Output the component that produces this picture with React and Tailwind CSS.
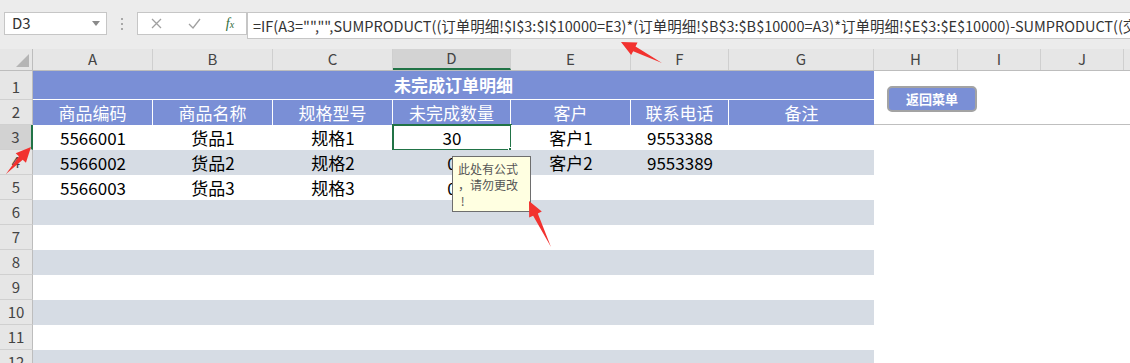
import React from 'react';

// column letters + widths (A..K), widths measured from the sheet
const cols = [
  { l: 'A', w: 'w-[120px]' },
  { l: 'B', w: 'w-[120px]' },
  { l: 'C', w: 'w-[120px]' },
  { l: 'D', w: 'w-[118px]' },
  { l: 'E', w: 'w-[120px]' },
  { l: 'F', w: 'w-[98px]' },
  { l: 'G', w: 'w-[145px]' },
  { l: 'H', w: 'w-[84px]' },
  { l: 'I', w: 'w-[83px]' },
  { l: 'J', w: 'w-[83px]' },
  { l: '', w: 'w-[83px]' },
];

const headers = ['商品编码', '商品名称', '规格型号', '未完成数量', '客户', '联系电话', '备注'];

const data = [
  ['5566001', '货品1', '规格1', '30', '客户1', '9553388', ''],
  ['5566002', '货品2', '规格2', '0', '客户2', '9553389', ''],
  ['5566003', '货品3', '规格3', '0', '', '', ''],
];

const FONT = "font-['Noto_Sans_CJK_SC',sans-serif]";

// red screenshot arrow from tail to tip
const arrowPoints = (x1, y1, x2, y2) => {
  const dx = x2 - x1;
  const dy = y2 - y1;
  const L = Math.hypot(dx, dy);
  const ux = dx / L;
  const uy = dy / L;
  const nx = -uy;
  const ny = ux;
  const h = 15;
  const w1 = 2.6;
  const w2 = 7;
  const bx = x2 - ux * h;
  const by = y2 - uy * h;
  const pts = [
    [x1, y1],
    [bx + nx * w1, by + ny * w1],
    [bx + nx * w2, by + ny * w2],
    [x2, y2],
    [bx - nx * w2, by - ny * w2],
    [bx - nx * w1, by - ny * w1],
  ];
  return pts.map((p) => p.join(',')).join(' ');
};

const FormulaBar = () => (
  <div className="h-[49px] bg-[#ececec] relative flex items-start pt-[12px] pl-[4px]">
    <div className="w-[103px] h-[23px] bg-white border border-[#c6c6c6] flex items-center justify-between pl-[7px] pr-[6px]">
      <span className="text-[15px] text-[#333]">D3</span>
      <svg width="8" height="5" viewBox="0 0 8 5">
        <path d="M0 0 L8 0 L4 5 Z" fill="#8a8a8a" />
      </svg>
    </div>
    <div className="w-[30px] h-[23px] flex flex-col items-center justify-center gap-[3px]">
      <span className="w-[2px] h-[2px] bg-[#a8a8a8]" />
      <span className="w-[2px] h-[2px] bg-[#a8a8a8]" />
      <span className="w-[2px] h-[2px] bg-[#a8a8a8]" />
    </div>
    <div className="w-[110px] h-[23px] bg-white border border-[#c6c6c6] flex items-center">
      <div className="w-[36px] flex justify-center">
        <svg width="11" height="11" viewBox="0 0 11 11">
          <path d="M1 1 L10 10 M10 1 L1 10" stroke="#a0a0a0" strokeWidth="1.3" />
        </svg>
      </div>
      <div className="w-[40px] flex justify-center">
        <svg width="13" height="11" viewBox="0 0 13 11">
          <path d="M1 6 L5 10 L12 1" stroke="#a0a0a0" strokeWidth="1.3" fill="none" />
        </svg>
      </div>
      <div className="w-[32px] flex justify-center">
        <span className="font-['Liberation_Serif',serif] italic text-[14px] text-[#2e6b3a] leading-none">
          f<span className="text-[10px]">x</span>
        </span>
      </div>
    </div>
    <div className="flex-1 h-[27px] bg-white border-y border-l border-[#c6c6c6] overflow-hidden whitespace-nowrap pl-[5px] flex items-center">
      <span className="text-[14.5px] text-[#333]">
        =IF(A3="","",SUMPRODUCT((订单明细!$I$3:$I$10000=E3)*(订单明细!$B$3:$B$10000=A3)*订单明细!$E$3:$E$10000)-SUMPRODUCT((交易明细!$I$3:$I$10000=E3)
      </span>
    </div>
  </div>
);

const ColHeader = () => (
  <div className="flex h-[22px] bg-[#e6e6e6] border-b border-[#bdbdbd]">
    <div className="w-[33px] shrink-0 relative border-r border-[#bdbdbd]">
      <svg className="absolute right-[3px] bottom-[3px]" width="13" height="13" viewBox="0 0 13 13">
        <path d="M13 0 L13 13 L0 13 Z" fill="#b5b5b5" />
      </svg>
    </div>
    {cols.map((c, i) => (
      <div
        key={i}
        className={`${c.w} shrink-0 flex items-center justify-center text-[15px] text-[#444] border-r border-[#cfcfcf] ${
          c.l === 'D' ? 'bg-[#d3d3d3] border-b-2 border-b-[#217346]' : ''
        }`}
      >
        {c.l}
      </div>
    ))}
  </div>
);

const RowNum = ({ n, h, active }) => (
  <div
    className={`w-[33px] shrink-0 ${h} flex items-end justify-center pb-[1px] text-[15px] text-[#444] border-b border-[#d0d0d0] ${
      active ? 'bg-[#d2d2d2] border-r-2 border-r-[#217346]' : 'bg-[#e6e6e6] border-r border-r-[#bdbdbd]'
    }`}
  >
    {n}
  </div>
);

export default function App() {
  const rows = [];
  for (let r = 3; r <= 12; r++) {
    const vals = data[r - 3] || [];
    const stripe = r % 2 === 0 ? 'bg-[#d6dce4]' : 'bg-white';
    rows.push(
      <div key={r} className="flex h-[25px]">
        <RowNum n={r} h="h-[25px]" active={r === 3} />
        {cols.map((c, i) => (
          <div
            key={i}
            className={`${c.w} shrink-0 relative flex items-center justify-center text-[17px] text-black ${
              i < 7 ? stripe : 'bg-white'
            }`}
          >
            {vals[i] || ''}
            {r === 3 && c.l === 'D' && (
              <div className="absolute left-[-1px] top-[-1px] right-[-1px] bottom-[-1px] border-2 border-[#217346]">
                <span className="absolute right-[-4px] bottom-[-4px] w-[6px] h-[6px] bg-[#217346] border border-white" />
              </div>
            )}
          </div>
        ))}
      </div>
    );
  }

  return (
    <div className={`w-[1130px] h-[363px] overflow-hidden bg-white relative ${FONT}`}>
      <FormulaBar />
      <ColHeader />

      {/* row 1: merged title */}
      <div className="flex h-[29px]">
        <RowNum n={1} h="h-[29px]" />
        <div className="w-[841px] shrink-0 bg-[#7a8fd6] border-b border-white flex items-center justify-center text-white font-bold text-[17px]">
          未完成订单明细
        </div>
        <div className="flex-1 bg-white" />
      </div>

      {/* row 2: column titles */}
      <div className="flex h-[25px]">
        <RowNum n={2} h="h-[25px]" />
        {headers.map((t, i) => (
          <div
            key={t}
            className={`${cols[i].w} shrink-0 bg-[#7a8fd6] flex items-center justify-center text-white text-[17px] ${
              i < 6 ? 'border-r border-white' : ''
            }`}
          >
            {t}
          </div>
        ))}
        <div className="flex-1 bg-white border-b border-[#bfbfbf]" />
      </div>

      {rows}

      {/* floating button */}
      <div className="absolute left-[887px] top-[86px] w-[90px] h-[26px] rounded-[5px] bg-[#7a8fd6] border-2 border-[#a3a3a3] flex items-center justify-center text-white font-bold text-[13px]">
        返回菜单
      </div>

      {/* comment */}
      <div className="absolute left-[452px] top-[156px] w-[79px] h-[56px] bg-[#ffffe1] border border-[#6e6e6e] px-[5px] pt-[4px] text-[12px] leading-[16px] text-[#555]">
        此处有公式
        <br />
        ，请勿更改
        <br />
        &nbsp;!
      </div>

      {/* red arrows */}
      <svg className="absolute left-0 top-0 pointer-events-none" width="1130" height="363">
        <polygon points={arrowPoints(662, 63, 621, 42)} fill="#f2322f" />
        <polygon points={arrowPoints(6, 174, 31, 147)} fill="#f2322f" />
        <polygon points={arrowPoints(551, 247, 529, 201)} fill="#f2322f" />
      </svg>
    </div>
  );
}
